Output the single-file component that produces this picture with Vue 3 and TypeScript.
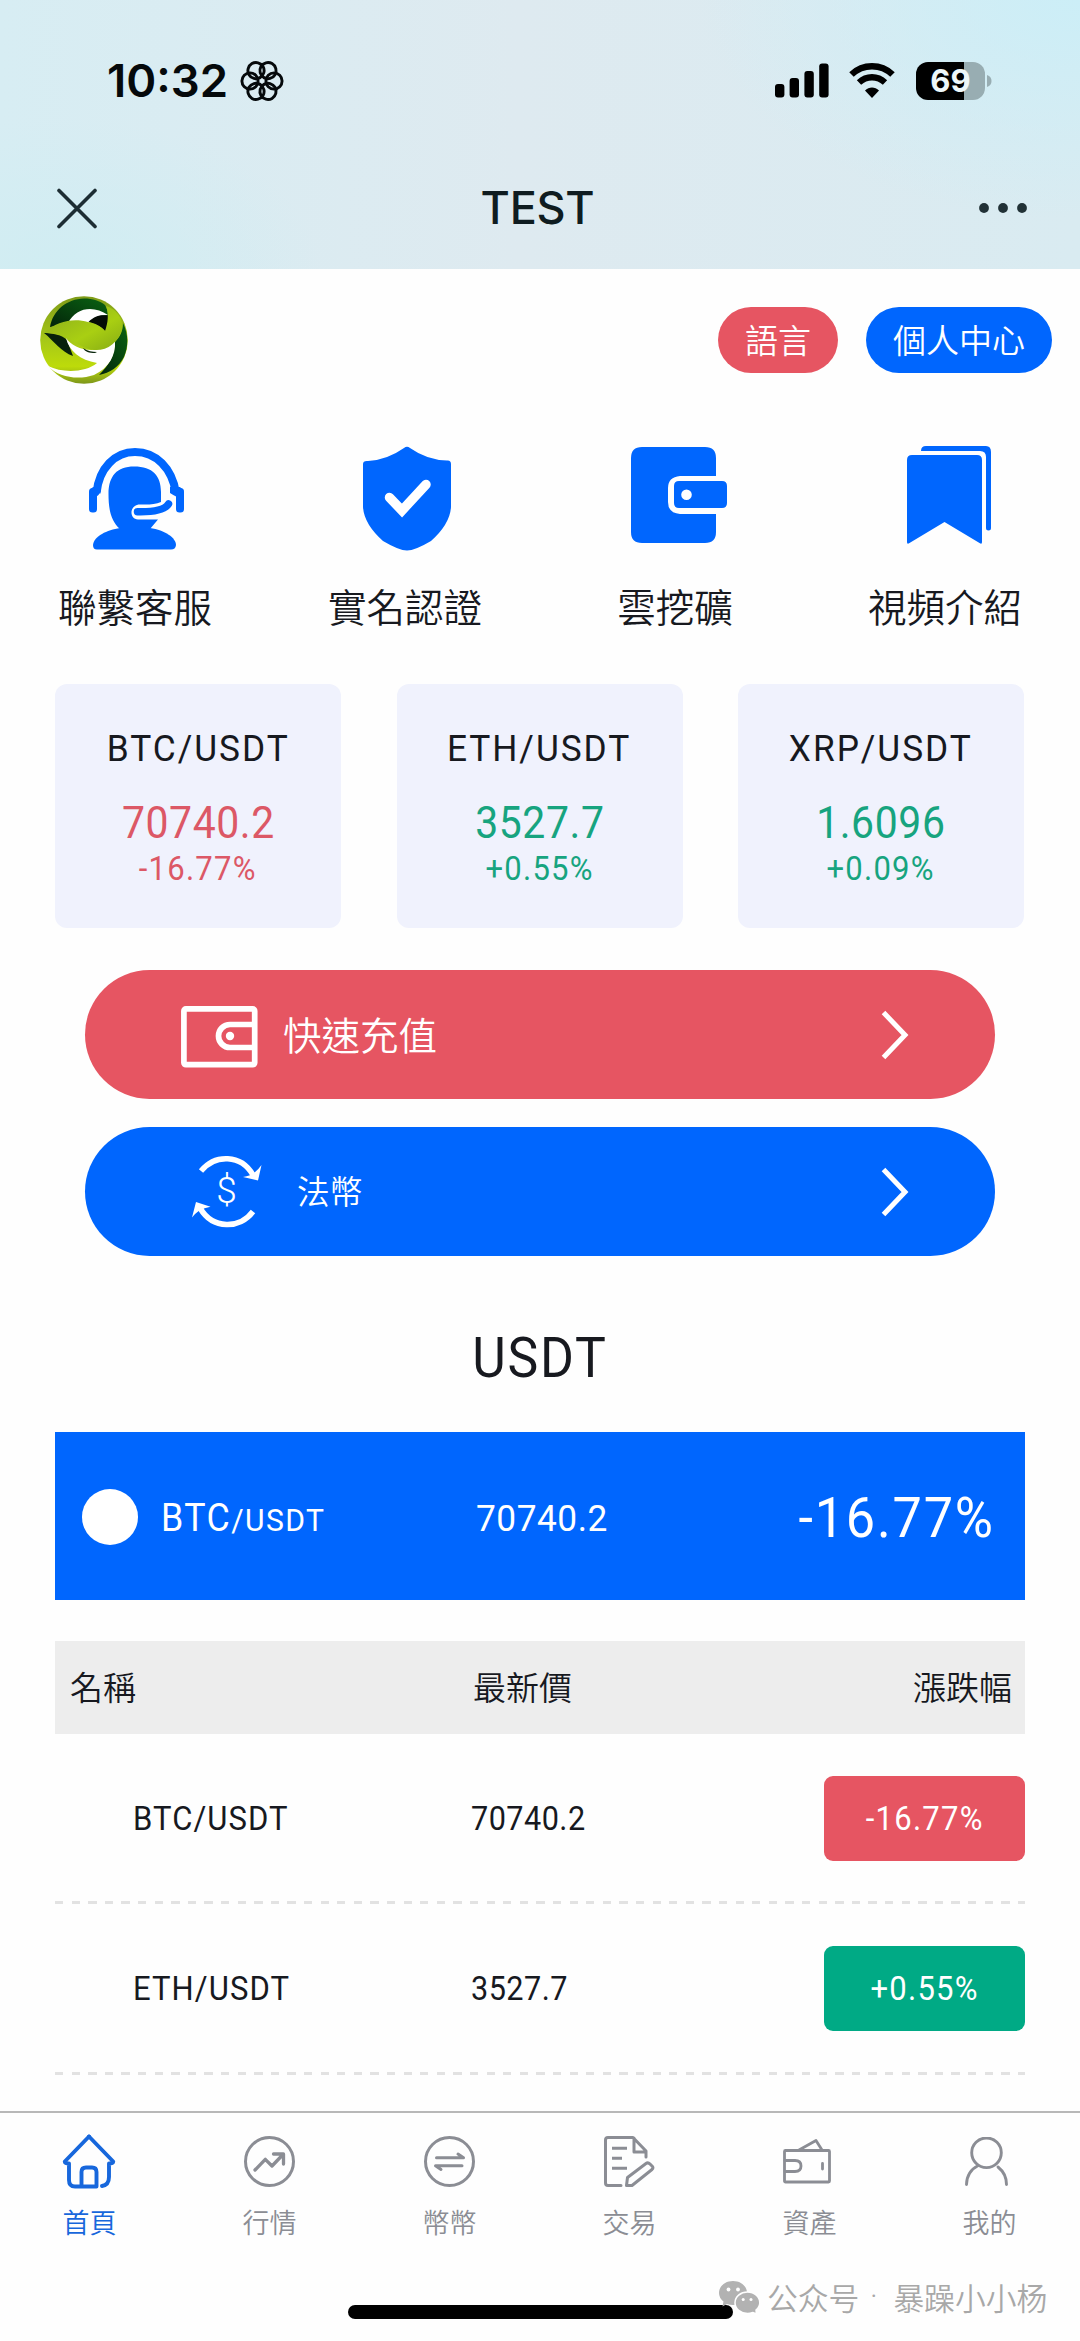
<script setup lang="ts">
type Trend = 'up' | 'down'

interface Quote {
  pair: string
  price: string
  change: string
  trend: Trend
}

interface Shortcut {
  icon: string
  label: string
}

const shortcuts: Shortcut[] = [
  { icon: 'service', label: '聯繫客服' },
  { icon: 'shield', label: '實名認證' },
  { icon: 'mining', label: '雲挖礦' },
  { icon: 'bookmark', label: '視頻介紹' },
]

const quotes: Quote[] = [
  { pair: 'BTC/USDT', price: '70740.2', change: '-16.77%', trend: 'down' },
  { pair: 'ETH/USDT', price: '3527.7', change: '+0.55%', trend: 'up' },
  { pair: 'XRP/USDT', price: '1.6096', change: '+0.09%', trend: 'up' },
]

const rows: Quote[] = quotes.slice(0, 2)

const tabs: Shortcut[] = [
  { icon: 'home', label: '首頁' },
  { icon: 'market', label: '行情' },
  { icon: 'swap', label: '幣幣' },
  { icon: 'trade', label: '交易' },
  { icon: 'assets', label: '資產' },
  { icon: 'mine', label: '我的' },
]

const petals: number[] = [0, 60, 120, 180, 240, 300]
</script>

<template>
  <div class="page">
    <header class="top">
      <div class="status">
        <div class="clock">
          <span class="time">10:32</span>
          <svg class="flower" width="46" height="44" viewBox="-23 -22 46 44">
            <circle v-for="a in petals" :key="a" cx="12" cy="0" r="8.1" fill="none" stroke="#05090b" stroke-width="2.9" :transform="`rotate(${a})`" />
          </svg>
        </div>
        <div class="signals">
          <svg width="54" height="35" viewBox="0 0 54 35">
            <rect x="0" y="21" width="9.4" height="13.5" rx="3" />
            <rect x="14.6" y="15" width="9.4" height="19.5" rx="3" />
            <rect x="29.4" y="8" width="9.4" height="26.5" rx="3" />
            <rect x="44.2" y="0.5" width="9.4" height="34" rx="3" />
          </svg>
          <svg class="wifi" width="46" height="35" viewBox="0 0 46 35">
            <path d="M2.5 11.5C14 0.5 32 0.5 43.500 11.500" fill="none" stroke="#000" stroke-width="6.500" />
            <path d="M10 19.500C17.500 12.500 28.500 12.500 36 19.500" fill="none" stroke="#000" stroke-width="6.300" />
            <path d="M23 35L16 27.500C20 23.500 26 23.500 30 27.500Z" />
          </svg>
          <div class="battery"><span>69</span></div>
          <svg class="nub" width="5" height="12" viewBox="0 0 5 12"><path d="M0 0C3 1 4.500 3 4.500 6S3 11 0 12Z" fill="#98adb2" /></svg>
        </div>
      </div>
      <div class="titlebar">
        <svg width="40" height="41" viewBox="0 0 40 41"><path d="M2 2.500L38 38.500M38 2.500L2 38.500" fill="none" stroke="#1d2d33" stroke-width="3.600" stroke-linecap="round" /></svg>
        <span class="title">TEST</span>
        <svg width="50" height="12" viewBox="0 0 50 12"><g fill="#213136"><circle cx="6" cy="6" r="4.900" /><circle cx="25" cy="6" r="4.900" /><circle cx="44" cy="6" r="4.900" /></g></svg>
      </div>
    </header>

    <div class="brand">
      <svg width="88" height="88" viewBox="0 0 88 88">
        <defs>
          <linearGradient id="lime" x1="0" y1="0" x2="0" y2="1">
            <stop offset="0" stop-color="#7f9b18" />
            <stop offset="0.5" stop-color="#a6c818" />
            <stop offset="0.8" stop-color="#bddb0a" />
            <stop offset="1" stop-color="#7d961b" />
          </linearGradient>
          <linearGradient id="leaf" x1="0" y1="0" x2="1" y2="1">
            <stop offset="0" stop-color="#87a81f" />
            <stop offset="0.6" stop-color="#a9cf12" />
            <stop offset="1" stop-color="#86ab14" />
          </linearGradient>
          <linearGradient id="forest" x1="0" y1="1" x2="1" y2="0">
            <stop offset="0" stop-color="#03240a" />
            <stop offset="1" stop-color="#0a6312" />
          </linearGradient>
        </defs>
        <circle cx="44" cy="44" r="43.800" fill="url(#lime)" />
        <path d="M10 31C13 14 27 3 44 2.500C53 2.500 60 5 65 9C67 12 68 16 68 20L29 27Z" fill="url(#forest)" />
        <path d="M28 27C36 11 54 9 68 19C58 19 52 22 49 27Z" fill="#fff" />
        <path d="M48.500 26C54 20 61 18.500 68 19.500C69 26 68 31 66 36C61 30 55 27 48.500 26Z" fill="#050c06" />
        <path d="M83 27C88 37 89 49 84 61C79 71 70 77 59 79C69 69 75 59 75 46C80 41 83 35 83 27Z" fill="url(#forest)" />
        <path d="M4 37C13 37 22 39 27 44L33 60C21 56 14 45 4 37Z" fill="#07200b" />
        <path d="M26 42C34 54 57 60 75 45C76 59 69 72 54 79C39 84 19 82 8 70C22 77 45 77 57 67C40 64 29 55 26 42Z" fill="#fff" />
        <path d="M43 52C48 55 52 56 57 56L55 57C49 57 45 56 43 52Z" fill="#0a270c" />
        <path d="M3 37C18 25 33 22 48 26C56 28 62 31 65 35C68 27 69 18 66 10C77 13 84 24 82 33C78 47 67 55 54 54C35 51 29 36 3 37Z" fill="url(#leaf)" />
      </svg>
      <div class="pills">
        <span class="pill red">語言</span>
        <span class="pill blue">個人中心</span>
      </div>
    </div>

    <nav class="shortcuts">
      <div v-for="s in shortcuts" :key="s.icon" class="shortcut">
        <svg v-if="s.icon === 'service'" class="ic-service" width="95" height="102" viewBox="0 0 95 102">
          <path d="M7.500 45C10 20 26 4 46 4C67 4 83 20 87 45" fill="none" stroke="#0066fe" stroke-width="8" />
          <rect x="0" y="40" width="8" height="24.500" rx="3.500" /><rect x="87" y="40" width="8" height="24.500" rx="3.500" />
          <path d="M1 42L4 39H12V43Q10 47 7 49ZM94 42L91 39H81V45Q84 47 88 49Z" />
          <path d="M31 81C22 73 19.500 62 19.500 46C19.500 28 28 18.500 45 18.500C64 18.500 72 28 72 44V54C66 57 58 56.500 51 56.500C40 56.500 40 71.500 49 71.500H69L61 81Z" />
          <path d="M31 80H61C76 82 87 90 87 97Q86.500 101.500 82 101.500H8Q4 101.500 4 97C5 88 18 82 31 80Z" />
          <path d="M48.500 63.700C62 64 75 63 79.500 56" fill="none" stroke="#0066fe" stroke-width="7.500" stroke-linecap="round" />
        </svg>
        <svg v-else-if="s.icon === 'shield'" class="ic-shield" width="88" height="105" viewBox="0 0 88 105">
          <path d="M41 2Q44 -0.500 47 2Q64 14 84 14.500Q88 14 88 18V61Q87 78 68 95Q52 104.500 44 104.500Q36 104.500 20 95Q1 78 0 61V18Q0 14.500 5 15Q24 14 41 2Z" />
          <path d="M26.500 51.500L39 64.500L63 38.500" fill="none" stroke="#fff" stroke-width="9.500" stroke-linecap="round" stroke-linejoin="miter" />
        </svg>
        <svg v-else-if="s.icon === 'mining'" class="ic-mining" width="96" height="97" viewBox="0 0 96 97">
          <path d="M11 0H74Q85 0 85 11V29H49Q37 30 37 41V55Q37 66 49 67H85V85Q85 96 74 96H11Q0 96 0 85V11Q0 0 11 0Z" />
          <path fill-rule="evenodd" d="M48 34H91Q96 34 96 39V56Q96 61 91 61H48Q43 61 43 56V39Q43 34 48 34ZM50.200 47.700A5.300 5.300 0 1 0 60.800 47.700A5.300 5.300 0 1 0 50.200 47.700Z" />
        </svg>
        <svg v-else class="ic-bookmark" width="84" height="98" viewBox="0 0 84 98">
          <path d="M5 9H70Q75 9 75 14V96Q75 99 72.500 97L37.500 76L2.500 97Q0 99 0 96V14Q0 9 5 9Z" />
          <path d="M14 5Q14 0 19 0H79Q84 0 84 6V82Q84 84.500 81.500 84.500Q79 84.500 79 82V11Q79 5 73 5Z" />
        </svg>
        <span>{{ s.label }}</span>
      </div>
    </nav>

    <section class="cards">
      <div v-for="q in quotes" :key="q.pair" class="card">
        <span class="din caps pair">{{ q.pair }}</span>
        <span class="din price" :class="q.trend">{{ q.price }}</span>
        <span class="din change" :class="q.trend">{{ q.change }}</span>
      </div>
    </section>

    <div class="banner red recharge">
      <svg width="77" height="62" viewBox="0 0 77 62" fill="none" stroke="#fff" stroke-width="5.700">
        <rect x="2.900" y="2.900" width="70.800" height="55.800" rx="2" />
        <path d="M73 18.500H49A11.400 11.400 0 0 0 49 41.500H73" />
        <circle cx="49" cy="30" r="4.200" fill="#fff" stroke="none" />
      </svg>
      <span>快速充值</span>
      <svg class="chev" width="28" height="50" viewBox="0 0 28 50"><path d="M2.500 2.500L24 25L2.500 47.500" fill="none" stroke="#fff" stroke-width="5" /></svg>
    </div>
    <div class="banner blue fiat">
      <svg width="70" height="73" viewBox="0 0 70 73" fill="none" stroke="#fff" stroke-width="5.500">
        <path d="M9 16C23 -1 49 -1 61 20" />
        <path d="M61 56.500C48 74 21 75 8 53" />
        <path d="M69.500 10L66 25.500L51 22Q62 21 69.500 10ZM4 47L0 62.500Q6 54 18.500 51.700Z" fill="#fff" stroke="none" />
        <text x="34.500" y="48" text-anchor="middle" class="dollar">$</text>
      </svg>
      <span>法幣</span>
      <svg class="chev" width="28" height="50" viewBox="0 0 28 50"><path d="M2.500 2.500L24 25L2.500 47.500" fill="none" stroke="#fff" stroke-width="5" /></svg>
    </div>

    <h2 class="heading"><span class="din caps">USDT</span></h2>

    <section class="feature">
      <i class="coin"></i>
      <span class="din caps name">BTC<small>/USDT</small></span>
      <span class="din fprice">70740.2</span>
      <span class="din fchange">-16.77%</span>
    </section>

    <section class="table">
      <div class="thead"><span>名稱</span><span>最新價</span><span>漲跌幅</span></div>
      <div v-for="r in rows" :key="r.pair" class="row">
        <span class="din caps rpair">{{ r.pair }}</span>
        <span class="din rprice">{{ r.price }}</span>
        <span class="badge" :class="r.trend"><span class="din">{{ r.change }}</span></span>
      </div>
    </section>

    <footer class="tabbar">
      <div v-for="(t, i) in tabs" :key="t.icon" class="tab" :class="{ active: i === 0 }">
        <span class="glyph" :class="t.icon">
          <svg v-if="t.icon === 'home'" width="54" height="55" viewBox="0 0 54 55" stroke-width="3.900">
            <path d="M27 2.500L2.800 27.500Q2.500 29.500 7 29.500V46Q7 52.500 13 52.500H34.500V38Q34.500 33.500 30 33.500H24Q19.500 33.500 19.500 38V52" />
            <path d="M27 2.500L51.200 27.500Q51.500 29.500 47 29.500V43Q47 51 40 52" />
          </svg>
          <svg v-else-if="t.icon === 'market'" width="51" height="51" viewBox="0 0 51 51" stroke-width="3">
            <circle cx="25.500" cy="25.500" r="24" />
            <path stroke-width="3.300" d="M11 34L21.300 23.300L28 30L39 18.500M29.500 18H39.500V28" />
          </svg>
          <svg v-else-if="t.icon === 'swap'" width="51" height="51" viewBox="0 0 51 51" stroke-width="3">
            <circle cx="25.500" cy="25.500" r="24" />
            <path d="M12.500 21.800H39.500L34 18M38 29.700H11.500L17 33.500" />
          </svg>
          <svg v-else-if="t.icon === 'trade'" width="51" height="51" viewBox="0 0 51 51" stroke-width="3">
            <path d="M17 49.500H4Q1.500 49.500 1.500 47V4Q1.500 1.500 4 1.500H29L42 15V21M30 2V16H42" />
            <path d="M8 12.300H23M8 22.300H18M8 32.300H23" stroke-linecap="butt" />
            <path d="M22.500 49.500L23.500 41.500L42 27.500Q44 26 46 28L48.500 30.500Q49.500 32 48 33.500L28 49.500Z" />
          </svg>
          <svg v-else-if="t.icon === 'assets'" width="48" height="45" viewBox="0 0 48 45" stroke-width="2.800">
            <rect x="1.500" y="11.500" width="45" height="31.500" rx="1" />
            <path d="M16 11L33 1.500L39 11M2 21.500H12Q18 21.500 18 27Q18 32.500 12 32.500H2M39.500 24.500V30" />
          </svg>
          <svg v-else width="44" height="49" viewBox="0 0 44 49" stroke-width="2.900">
            <circle cx="21.500" cy="15.800" r="14.800" />
            <path d="M1.500 47.500C1.500 39 6 32 12.500 29M33 30C38 34 41.500 40 41.500 47.500" />
          </svg>
        </span>
        <span class="tablabel">{{ t.label }}</span>
      </div>
    </footer>

    <div class="bottom">
      <div class="indicator"></div>
      <div class="watermark">
        <svg width="42" height="34" viewBox="0 0 42 34">
          <path fill="#b2b2b2" d="M14 0C22 0 28 5.200 28 12S22 24 14 24Q11 24 8 23L3.500 25.500L4.500 20.500Q0 17 0 12C0 5.200 6 0 14 0Z" />
          <path fill="#b2b2b2" stroke="#fff" stroke-width="1.500" d="M28.500 11C35.500 11 40.800 15.800 40.800 21.800Q40.800 26 37 29L37.500 33L34 31.500Q31 32.500 28.500 32.500C21.500 32.500 16 27.800 16 21.800S21.500 11 28.500 11Z" />
          <g fill="#fff"><circle cx="9.500" cy="8.500" r="1.900" /><circle cx="19" cy="8.500" r="1.900" /><circle cx="24.200" cy="18.500" r="1.500" /><circle cx="32" cy="18.500" r="1.500" /></g>
        </svg>
        <span class="wm-kind">公众号</span><span class="wm-dot">·</span><span>暴躁小小杨</span>
      </div>
    </div>
  </div>
</template>

<style>
body {
  background: #fefefe;
}
</style>

<style scoped>
.page {
  width: 1080px;
  height: 2341px;
  display: flex;
  flex-direction: column;
  overflow: hidden;
  background: #fefefe;
  color: #17191f;
  font-family: "Noto Sans CJK TC", "Noto Sans", sans-serif;
}
svg {
  display: block;
  flex: none;
}
.din {
  display: block;
  font-family: Roboto, "Noto Sans", sans-serif;
  white-space: nowrap;
  transform: scaleX(0.94);
  letter-spacing: 0.015em;
}
.caps {
  letter-spacing: 0.035em;
}
.top {
  height: 269px;
  flex: none;
  background:
    radial-gradient(ellipse 380px 220px at 1080px 0, #cceef7 0%, rgba(204, 238, 247, 0) 100%),
    radial-gradient(ellipse 260px 150px at 60px 269px, #d0edf2 0%, rgba(208, 237, 242, 0) 100%),
    linear-gradient(90deg, #d7edf3 0%, #deeaf0 48%, #d9ebf1 100%);
}
.status {
  height: 162px;
  display: flex;
  justify-content: space-between;
  padding: 0 88px 0 107px;
}
.clock,
.signals {
  display: flex;
  align-items: center;
  height: 161px;
}
.time {
  font: 600 45.500px/60px Inter, sans-serif;
  width: 132px;
  color: #05090b;
}
.wifi {
  margin: 0 21px 0 20px;
}
.battery {
  width: 69px;
  height: 38px;
  border-radius: 12px;
  background: linear-gradient(90deg, #000 48px, #98adb2 48px);
  color: #eef7f9;
  font: 700 31px/38px Inter, sans-serif;
  text-align: center;
}
.nub {
  margin-left: 2px;
}
.titlebar {
  height: 92px;
  padding: 0 52px 0 57px;
  display: flex;
  justify-content: space-between;
  align-items: center;
}
.title {
  font: 500 45px/60px Inter, sans-serif;
  letter-spacing: -0.3px;
  color: #0f1c20;
}
.brand {
  height: 141px;
  flex: none;
  padding: 0 28px 0 40px;
  display: flex;
  justify-content: space-between;
  align-items: center;
}
.pills {
  display: flex;
  gap: 28px;
}
.pill {
  height: 66px;
  border-radius: 34px;
  padding: 0 27px;
  font-size: 33px;
  line-height: 64px;
  font-weight: 350;
  color: #fff;
}
.red {
  background: #e65562;
}
.blue {
  background: #0066fe;
}
.shortcuts {
  height: 274px;
  flex: none;
  display: grid;
  grid-template-columns: repeat(4, 270px);
}
.shortcut {
  padding-top: 36px;
  height: 238px;
  display: flex;
  flex-direction: column;
  align-items: center;
  fill: #0066fe;
}
.shortcut span {
  margin-top: auto;
  margin-bottom: 51px;
  font-size: 38.500px;
  line-height: 56px;
  height: 56px;
  font-weight: 350;
}
.ic-service {
  margin: 2px 0 0 2px;
}
.ic-shield {
  margin-left: 3px;
}
.ic-mining {
  margin: 1px 0 0 8px;
}
.ic-bookmark {
  margin-left: 8px;
}
.cards {
  padding: 0 56px 0 55px;
  flex: none;
  display: grid;
  grid-template-columns: repeat(3, 286px);
  justify-content: space-between;
}
.card {
  height: 244px;
  border-radius: 12px;
  background: #f0f2fd;
  display: flex;
  flex-direction: column;
  align-items: center;
}
.pair {
  margin-top: 39px;
  font-size: 37.500px;
  line-height: 50px;
  letter-spacing: 0.056em;
}
.price {
  margin-top: 25px;
  font-size: 43.500px;
  line-height: 52px;
}
.change {
  margin-top: -1px;
  font-size: 33px;
  line-height: 40px;
  letter-spacing: 0.04em;
}
.price.down,
.change.down {
  color: #dc5866;
}
.price.up,
.change.up {
  color: #17a47f;
}
.banner {
  height: 129px;
  flex: none;
  margin: 42px 85px 0;
  border-radius: 65px;
  display: flex;
  align-items: center;
  color: #fff;
  font-weight: 350;
}
.recharge {
  padding: 0 86px 0 96px;
  font-size: 38.500px;
  gap: 25px;
}
.recharge svg:first-child {
  margin-top: 4px;
}
.recharge span,
.fiat span {
  line-height: 60px;
  margin-top: -4px;
}
.fiat {
  margin-top: 28px;
  padding: 0 86px 0 107px;
  font-size: 32.700px;
  gap: 35px;
}
.chev {
  margin-left: auto;
}
.dollar {
  font: 300 37px Roboto, sans-serif;
  fill: #fff;
  stroke: none;
}
.heading {
  margin: 69px 0 0;
  flex: none;
  height: 107px;
  font-size: 55px;
  line-height: 67px;
  font-weight: 400;
  text-align: center;
}
.feature {
  height: 167px;
  flex: none;
  margin: 0 55px;
  background: #0066fe;
  color: #fff;
  display: grid;
  grid-template-columns: 106px 315px 1fr auto;
  align-items: center;
  padding-top: 1px;
}
.coin {
  width: 56px;
  height: 56px;
  border-radius: 50%;
  background: #fff;
  margin-left: 27px;
}
.name,
.fprice,
.rpair,
.rprice {
  transform-origin: left;
}
.name {
  font-size: 38px;
  letter-spacing: 0.04em;
  padding-top: 2px;
}
.name small {
  font-size: 32px;
}
.fprice {
  font-size: 37.500px;
  padding-top: 2px;
}
.fchange {
  font-size: 55.500px;
  letter-spacing: 0.035em;
  transform-origin: right;
  padding: 3px 32px 0 0;
}
.table {
  margin: 41px 55px 0;
  flex: none;
}
.thead {
  height: 93px;
  background: #ededed;
  padding: 0 13px 0 15px;
  display: grid;
  grid-template-columns: 403px 1fr auto;
  font-size: 33px;
  line-height: 91px;
  font-weight: 350;
}
.row {
  height: 170.300px;
  display: grid;
  grid-template-columns: 338px 1fr 201px;
  align-items: center;
  padding: 0 0 1px 78px;
  box-sizing: border-box;
  font-size: 33px;
  background: repeating-linear-gradient(90deg, #e2e2e2 0 8.300px, transparent 8.300px 16.600px) 0 100% / 100% 3px no-repeat;
}
.rprice {
  font-size: 32.600px;
}
.badge {
  height: 85px;
  border-radius: 9px;
  display: flex;
  align-items: center;
  justify-content: center;
  color: #fff;
}
.badge .din {
  letter-spacing: 0.04em;
}
.badge.down {
  background: #e65562;
}
.badge.up {
  background: #00aa85;
}
.tabbar {
  margin-top: auto;
  height: 140px;
  flex: none;
  border-top: 2px solid #b8b8b8;
  display: grid;
  grid-template-columns: repeat(6, 180px);
}
.tab {
  display: flex;
  flex-direction: column;
  align-items: center;
  color: #8b8d94;
}
.active {
  color: #1767dc;
}
.glyph {
  margin: 19px 1px 0 0;
  height: 58px;
  display: flex;
  align-items: center;
}
.glyph.home {
  margin-right: 2px;
}
.glyph.assets {
  margin-right: 6px;
}
.glyph.mine {
  margin-right: 7px;
}
.glyph svg {
  fill: none;
  stroke: currentColor;
  stroke-linecap: round;
  stroke-linejoin: round;
}
.tablabel {
  margin: 11px 1px 0 0;
  font-size: 27px;
  line-height: 42px;
  font-weight: 350;
}
.bottom {
  height: 88px;
  flex: none;
  position: relative;
}
.indicator {
  position: absolute;
  left: 348px;
  top: 52px;
  width: 385px;
  height: 14px;
  border-radius: 7px;
  background: #000;
}
.watermark {
  position: absolute;
  left: 719px;
  top: 23px;
  height: 44px;
  display: flex;
  align-items: center;
  color: #a8a8a8;
  font: 350 30.800px/44px "Noto Sans CJK SC", sans-serif;
  white-space: nowrap;
}
.watermark span {
  margin-top: -2px;
}
.wm-kind {
  padding-left: 6px;
}
.watermark .wm-dot {
  width: 29px;
  text-align: center;
  margin-right: 5px;
  font-family: Roboto, sans-serif;
}
</style>
